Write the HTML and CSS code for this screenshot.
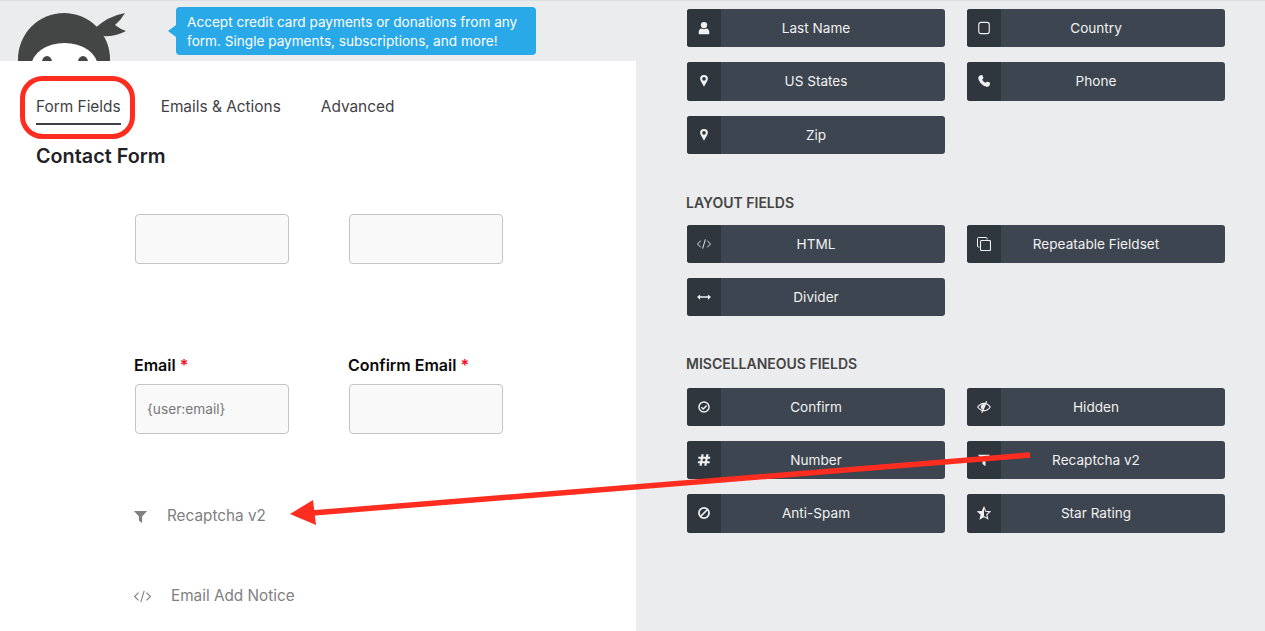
FILE: index.html
```html
<!DOCTYPE html>
<html lang="en">
<head>
    <meta charset="UTF-8">
    <title>Form Fields</title>
    <link rel="stylesheet" href="styles.css">
</head>
<body>
    <svg class="defs" width="0" height="0">
        <symbol id="i-user" viewBox="0 0 16 16"><circle cx="8" cy="4.6" r="3.6" fill="currentColor"/><path d="M2 15v-2.6C2 10 3.6 8.6 5.4 8.6c1.600 1 3.600 1 5.200 0C12.400 8.600 14 10 14 12.400V15z" fill="currentColor"/></symbol>
        <symbol id="i-square" viewBox="0 0 16 16"><rect x="2" y="1.500" width="12" height="13" rx="2.500" fill="none" stroke="currentColor" stroke-width="1.300"/></symbol>
        <symbol id="i-marker" viewBox="0 0 16 16"><path fill-rule="evenodd" d="M8 1a4.500 4.500 0 0 0-4.500 4.500c0 2.700 3.200 6 4.500 9.200 1.300-3.200 4.500-6.500 4.500-9.200A4.500 4.500 0 0 0 8 1zM8 3.400a2.100 2.100 0 1 1 0 4.200 2.100 2.100 0 0 1 0-4.200z" fill="currentColor"/></symbol>
        <symbol id="i-phone" viewBox="0 0 16 16"><path d="M4 1.500 6 1l1.500 3.500L6 6c.5 2 2 3.500 4 4l1.500-1.500L15 10l-.5 2.500c-.5 1.500-2 2.500-3.500 2C6.500 13.500 2.500 9.500 1.500 5 1.300 3.500 2.500 2 4 1.500z" fill="currentColor"/></symbol>
        <symbol id="i-code" viewBox=".5 .5 15 15"><path d="M4.500 4.500 1 8l3.500 3.500M11.500 4.500 15 8l-3.500 3.500M9.500 3 6.500 13" fill="none" stroke="currentColor" stroke-width="1"/></symbol>
        <symbol id="i-files" viewBox="1 1 14 14"><path d="M11 3.500V2.500A1 1 0 0 0 10 1.500H2.500a1 1 0 0 0-1 1V10a1 1 0 0 0 1 1h1" fill="none" stroke="currentColor" stroke-width="1"/><rect x="4.500" y="4.500" width="10" height="10" rx="1" fill="none" stroke="currentColor" stroke-width="1.100"/></symbol>
        <symbol id="i-arrows" viewBox="0 0 16 16"><path d="M2 8h12" stroke="currentColor" stroke-width="1.500"/><path d="M0 8l3.500-3v6zM16 8l-3.500-3v6z" fill="currentColor"/></symbol>
        <symbol id="i-check" viewBox="0 0 16 16"><circle cx="8" cy="8" r="5.800" fill="none" stroke="currentColor" stroke-width="1.700"/><path d="M5 8.200 7.200 10.300 11 6.200" fill="none" stroke="currentColor" stroke-width="1.700"/></symbol>
        <symbol id="i-eye" viewBox="0 0 16 16"><path d="M.8 8C3 5 5.500 3.800 8 3.800S13 5 15.200 8C13 11 10.500 12.200 8 12.200S3 11 .8 8z" fill="none" stroke="currentColor" stroke-width="1.300"/><path d="M8 4.500a3.500 3.500 0 0 0-2 6.500l3.500-6z" fill="currentColor"/><path d="M11 1.500 5.500 14.500" stroke="currentColor" stroke-width="1.500"/></symbol>
        <symbol id="i-hash" viewBox="0 0 16 16"><path d="M6.500 1.500 4 14.500M12 1.500 9.500 14.500M1.500 5.500h13.500M1 10.500h13.500" fill="none" stroke="currentColor" stroke-width="2.400"/></symbol>
        <symbol id="i-filter" viewBox="0 0 16 16"><path d="M1 2h14L9.700 8v7L6.300 12.500V8z" fill="currentColor"/></symbol>
        <symbol id="i-ban" viewBox="0 0 16 16"><circle cx="8" cy="8" r="5.800" fill="none" stroke="currentColor" stroke-width="2"/><path d="M4 12 12 4" stroke="currentColor" stroke-width="2"/></symbol>
        <symbol id="i-star" viewBox="0 0 16 16"><path d="M8 1.500 10 6l4.800.5-3.600 3.200 1.100 4.800L8 12 3.700 14.500l1.100-4.800L1.200 6.500 6 6z" fill="none" stroke="currentColor" stroke-width="1.200"/><path d="M8 1.500V12L3.700 14.500l1.100-4.800L1.200 6.500 6 6z" fill="currentColor"/></symbol>
    </svg>

    <div class="left">
        <div class="top">
            <svg class="logo" width="110" height="60" viewBox="0 0 110 60">
                <path d="M76 28Q90 15 107 12Q103 19 97 24Q102 28 108 30Q97 36 86 35z" fill="#444645"/>
                <circle cx="46" cy="58" r="46" fill="#444645"/>
                <ellipse cx="46.500" cy="65" rx="33" ry="23" fill="#fff"/>
                <ellipse cx="29" cy="61" rx="5" ry="6" fill="#444645"/>
                <ellipse cx="65" cy="61" rx="5" ry="6" fill="#444645"/>
            </svg>
            <div class="bubble">Accept credit card payments or donations from any form. Single payments, subscriptions, and more!</div>
        </div>
        <div class="panel">
            <div class="tabs">
                <span class="tab active">Form Fields</span>
                <span class="tab">Emails &amp; Actions</span>
                <span class="tab">Advanced</span>
            </div>
            <h2 class="form-title">Contact Form</h2>
            <div class="field-row first">
                <div class="field"><div class="box"></div></div>
                <div class="field"><div class="box"></div></div>
            </div>
            <div class="field-row second">
                <div class="field">
                    <div class="field-label">Email <span class="req">*</span></div>
                    <div class="box">{user:email}</div>
                </div>
                <div class="field">
                    <div class="field-label">Confirm Email <span class="req">*</span></div>
                    <div class="box"></div>
                </div>
            </div>
            <div class="hidden-row recaptcha">
                <svg class="hidden-ico"><use href="#i-filter"/></svg>
                <span>Recaptcha v2</span>
            </div>
            <div class="hidden-row notice">
                <svg class="hidden-ico wide"><use href="#i-code"/></svg>
                <span>Email Add Notice</span>
            </div>
        </div>
    </div>

    <div class="right">
        <div class="btn-grid">
            <div class="btn"><span class="btn-icon"><svg><use href="#i-user"/></svg></span><span class="btn-label">Last Name</span></div>
            <div class="btn"><span class="btn-icon"><svg><use href="#i-square"/></svg></span><span class="btn-label">Country</span></div>
            <div class="btn"><span class="btn-icon"><svg><use href="#i-marker"/></svg></span><span class="btn-label">US States</span></div>
            <div class="btn"><span class="btn-icon"><svg><use href="#i-phone"/></svg></span><span class="btn-label">Phone</span></div>
            <div class="btn"><span class="btn-icon"><svg><use href="#i-marker"/></svg></span><span class="btn-label">Zip</span></div>
        </div>
        <div class="group-title">Layout Fields</div>
        <div class="btn-grid">
            <div class="btn"><span class="btn-icon"><svg><use href="#i-code"/></svg></span><span class="btn-label">HTML</span></div>
            <div class="btn"><span class="btn-icon"><svg><use href="#i-files"/></svg></span><span class="btn-label">Repeatable Fieldset</span></div>
            <div class="btn"><span class="btn-icon"><svg><use href="#i-arrows"/></svg></span><span class="btn-label">Divider</span></div>
        </div>
        <div class="group-title misc">Miscellaneous Fields</div>
        <div class="btn-grid">
            <div class="btn"><span class="btn-icon"><svg><use href="#i-check"/></svg></span><span class="btn-label">Confirm</span></div>
            <div class="btn"><span class="btn-icon"><svg><use href="#i-eye"/></svg></span><span class="btn-label">Hidden</span></div>
            <div class="btn"><span class="btn-icon"><svg><use href="#i-hash"/></svg></span><span class="btn-label">Number</span></div>
            <div class="btn"><span class="btn-icon"><svg><use href="#i-filter"/></svg></span><span class="btn-label">Recaptcha v2</span></div>
            <div class="btn"><span class="btn-icon"><svg><use href="#i-ban"/></svg></span><span class="btn-label">Anti-Spam</span></div>
            <div class="btn"><span class="btn-icon"><svg><use href="#i-star"/></svg></span><span class="btn-label">Star Rating</span></div>
        </div>
    </div>

    <!-- annotations drawn on top of the screenshot -->
    <svg class="marks" width="1265" height="631" viewBox="0 0 1265 631">
        <rect x="22.500" y="78.500" width="110" height="58" rx="20" fill="none" stroke="#ff2d1f" stroke-width="5"/>
        <path d="M1030 455 312 513" stroke="#ff2d1f" stroke-width="5.500"/>
        <path d="M290 514 313 500 316 525z" fill="#ff2d1f"/>
    </svg>
</body>
</html>
```

FILE: styles.css
```css
* {
    box-sizing: border-box;
}
html, body {
    height: 631px;
}
body {
    margin: 0;
    overflow: hidden;
    display: flex;
    position: relative;
    font-family: Inter, "Liberation Sans", sans-serif;
    background-color: #ebecee;
    border-top: 1px solid #dcdee2;
}
.defs {
    position: absolute;
}
.left {
    width: 636px;
    flex-shrink: 0;
    display: flex;
    flex-direction: column;
}
.top {
    height: 60px;
    display: flex;
    align-items: flex-start;
    overflow: hidden;
}
.logo {
    margin-left: 18px;
    flex-shrink: 0;
}
.bubble {
    position: relative;
    width: 360px;
    height: 48px;
    margin: 6px 0 0 48px;
    padding: 6px 11px;
    background: #2aa9e8;
    color: white;
    font-size: 13.600px;
    line-height: 19px;
    border-radius: 4px;
}
.bubble::before {
    content: "";
    position: absolute;
    left: -8px;
    top: 18px;
    border: 6px solid transparent;
    border-left: 0;
    border-right: 8px solid #2aa9e8;
}
.panel {
    flex: 1;
    background: white;
    padding: 0 0 0 36px;
}
.tabs {
    display: flex;
    gap: 40px;
    padding-top: 36px;
}
.tab {
    font-size: 15.400px;
    line-height: 19px;
    color: #3f3f46;
    padding-bottom: 7px;
    border-bottom: 2px solid transparent;
}
.tab.active {
    border-bottom-color: #3f3f46;
}
.form-title {
    margin: 19px 0 0;
    font-size: 19.800px;
    line-height: 24px;
    font-weight: 600;
    color: #1f2227;
}
.field-row {
    display: flex;
    gap: 60px;
    margin-left: 99px;
}
.field-row.first {
    margin-top: 46px;
}
.field-row.second {
    margin-top: 92px;
}
.field {
    width: 154px;
}
.field-label {
    font-size: 16px;
    line-height: 19px;
    font-weight: 600;
    color: #0a0a0a;
    margin: 0 0 9px -1px;
    white-space: nowrap;
}
.req {
    color: #f0101e;
}
.box {
    height: 50px;
    padding: 0 11px;
    background: #f9f9f9;
    border: 1px solid #c4c4c4;
    border-radius: 4px;
    font-size: 13.700px;
    line-height: 48px;
    color: #787878;
}
.hidden-row {
    display: flex;
    align-items: center;
    margin-left: 98px;
    font-size: 15.300px;
    line-height: 20px;
    color: #808080;
}
.hidden-row.recaptcha {
    margin-top: 72px;
    gap: 19px;
}
.hidden-row.notice {
    margin-top: 60px;
    gap: 20px;
}
.hidden-ico {
    width: 15px;
    height: 15px;
    margin-left: -1px;
}
.hidden-ico.wide {
    width: 17px;
    height: 17px;
    margin-left: 0;
}
.right {
    padding: 8px 0 0 51px;
}
.btn-grid {
    display: grid;
    grid-template-columns: 258px 258px;
    column-gap: 22px;
    row-gap: 15.130px;
}
.btn {
    height: 38.200px;
    display: flex;
    background: #3d4550;
    color: #f1f1f1;
    border-radius: 3px;
    overflow: hidden;
    font-size: 13.600px;
}
.btn-icon {
    width: 34px;
    flex-shrink: 0;
    display: flex;
    align-items: center;
    justify-content: center;
    background: #30363d;
}
.btn-icon svg {
    width: 14px;
    height: 14px;
}
.btn-label {
    flex: 1;
    padding-right: 34px;
    text-align: center;
    line-height: 38px;
    font-weight: 400;
}
.group-title {
    margin: 39.700px 0 14.300px -1px;
    font-size: 14px;
    line-height: 17px;
    font-weight: 600;
    text-transform: uppercase;
    color: #444;
}
.group-title.misc {
    margin-top: 38.400px;
    margin-bottom: 16px;
}
.marks {
    position: absolute;
    left: 0;
    top: -1px;
    pointer-events: none;
}
```
